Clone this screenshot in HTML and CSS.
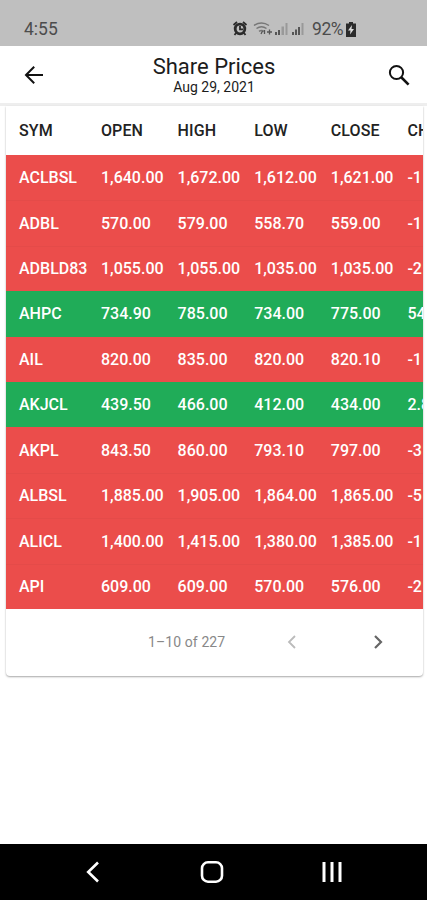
FILE: index.html
```
<!DOCTYPE html>
<html lang="en">
	<head>
		<meta charset="utf-8">
		<title>Share Prices</title>
		<link rel="stylesheet" href="styles.css">
	</head>
	<body>
		<div class="status">
			<span class="time">4:55</span>
			<svg class="status-icons" width="72" height="18" viewBox="0 0 72 18">
				<!-- alarm -->
				<circle cx="8" cy="9" r="4.8" fill="none" stroke="#2b2b2b" stroke-width="2.8"/>
				<path d="M8 6v3.400h3M1.500 5L5 2M14.500 5L11 2M4 13l-1.500 2M12 13l1.500 2" fill="none" stroke="#2b2b2b" stroke-width="1.800"/>
				<!-- wifi -->
				<path d="M22 5.500q7.500-5 15 0M24.500 8.500q5-3.500 10 0M27 11.300q2.500-1.800 5 0" fill="none" stroke="#777" stroke-width="1.500"/>
				<path d="M29 14l1.500-3M32.500 10v4M37.500 9.500v5M35 12h5" fill="none" stroke="#555" stroke-width="1.300"/>
				<!-- signal -->
				<path d="M43 12h2v3h-2zM46 10h2v5h-2z" fill="#555"/>
				<path d="M49.500 6.500h2.500v8.500h-2.500zM53.500 3h2v12h-2z" fill="#999"/>
				<path d="M60 12h2v3h-2zM63 9.500h2v5.500h-2zM66 7h2v8h-2z" fill="#555"/>
				<path d="M69.500 3h2v12h-2z" fill="#999"/>
			</svg>
			<span class="percent">92%</span>
			<svg class="battery" width="10" height="15" viewBox="0 0 10 15">
				<path d="M3 0h4v1.500h3V15H0V1.500h3z" fill="#2b2b2b"/>
				<path d="M6 3L2 8.500h2.500L4 12.500l4-5.500H5.500z" fill="#ddd"/>
			</svg>
		</div>

		<div class="header">
			<svg width="20" height="20" viewBox="0 0 20 20">
				<path d="M10.200 1.800L2 10l8.200 8.200M2 10h17" fill="none" stroke="#111" stroke-width="2"/>
			</svg>
			<div class="title">
				<h1>Share Prices</h1>
				<h2>Aug 29, 2021</h2>
			</div>
			<svg width="22" height="22" viewBox="0 0 22 22">
				<circle cx="8.500" cy="8.500" r="6.600" fill="none" stroke="#111" stroke-width="2"/>
				<path d="M13 13l7.600 7.600" stroke="#111" stroke-width="2.600"/>
			</svg>
		</div>

		<div class="card">
			<ul class="row head">
				<li>SYM</li>
				<li>OPEN</li>
				<li>HIGH</li>
				<li>LOW</li>
				<li>CLOSE</li>
				<li>CH</li>
			</ul>
			<div id="prices"></div>
			<div class="pager">
				<span class="range">1–10 of 227</span>
				<svg class="prev" width="10" height="14" viewBox="0 0 10 14">
					<path d="M8 1L2 7l6 6" fill="none" stroke="#bbb" stroke-width="1.800"/>
				</svg>
				<svg class="next" width="10" height="14" viewBox="0 0 10 14">
					<path d="M2 1l6 6-6 6" fill="none" stroke="#666" stroke-width="2.200"/>
				</svg>
			</div>
		</div>

		<div class="navbar">
			<svg width="14" height="22" viewBox="0 0 14 22">
				<path d="M12 1.500L2.200 11l9.800 9.500" fill="none" stroke="#fff" stroke-width="2.600"/>
			</svg>
			<svg width="24" height="22" viewBox="0 0 24 22">
				<rect x="2" y="1.300" width="20" height="19.400" rx="6" fill="none" stroke="#fff" stroke-width="2.600"/>
			</svg>
			<svg class="recents" width="20" height="22" viewBox="0 0 20 22">
				<path d="M2 1v20M10 1v20M18 1v20" stroke="#fff" stroke-width="3"/>
			</svg>
		</div>

		<script src="prices.js"></script>
	</body>
</html>
```
FILE: styles.css
```
* {
	margin: 0;
	padding: 0;
	box-sizing: border-box;
}
body {
	display: flex;
	flex-direction: column;
	height: 900px;
	overflow: hidden;
	background-color: #fff;
	font-family: Roboto, sans-serif;
}
svg {
	display: block;
	flex: none;
}
.status {
	display: flex;
	align-items: center;
	flex: none;
	height: 46px;
	padding: 12px 0 0 24px;
	background-color: #bfbfbf;
	color: #4c4c4c;
	font-size: 17.5px;
}
.time {
	width: 208px;
}
.percent {
	width: 34px;
	margin-left: 8px;
	letter-spacing: -.4px;
}
.header {
	display: flex;
	align-items: center;
	flex: none;
	height: 60px;
	padding: 1px 17px 0 24px;
	border-bottom: 3px solid #eee;
}
.title {
	flex: 1;
	padding-right: 4px;
	text-align: center;
	color: #1c1c1c;
}
.title h1 {
	font-size: 22px;
	font-weight: 400;
	line-height: 24px;
}
.title h2 {
	font-size: 14px;
	font-weight: 400;
	line-height: 16px;
}
.card {
	flex: none;
	width: 416.5px;
	height: 570px;
	margin-left: 6px;
	overflow: hidden;
	background-color: #fff;
	border-radius: 0 0 4px 4px;
	box-shadow: 0 1px 2px rgba(0,0,0,.35);
}
.row {
	display: grid;
	grid-template-columns: 82px repeat(4, 76.6px) 1fr;
	align-items: center;
	height: 45.4px;
	padding-left: 13px;
	list-style: none;
	white-space: nowrap;
	color: #fff;
	font-size: 16px;
	font-weight: 500;
}
.row li {
	min-width: 0;
}
.row.head {
	height: 49px;
	color: #222;
	letter-spacing: .1px;
}
.down {
	background-color: #eb4d4b;
}
.down + .down {
	border-top: 1px solid #e44b49;
}
.up {
	background-color: #20ac58;
}
.pager {
	display: flex;
	align-items: center;
	height: 67px;
	color: #888;
	font-size: 14px;
}
.range {
	width: 139px;
	margin-left: 142px;
	letter-spacing: .1px;
}
.next {
	margin-left: 76px;
}
.navbar {
	display: flex;
	align-items: center;
	flex: none;
	height: 56px;
	margin-top: auto;
	padding-left: 86px;
	gap: 100px;
	background-color: #000;
}
.recents {
	margin-left: -2px;
}
```
FILE: prices.js
```
var pricesElement = document.getElementById("prices");

var prices = [
	["ACLBSL", "1,640.00", "1,672.00", "1,612.00", "1,621.00", "-1"],
	["ADBL", "570.00", "579.00", "558.70", "559.00", "-1"],
	["ADBLD83", "1,055.00", "1,055.00", "1,035.00", "1,035.00", "-2"],
	["AHPC", "734.90", "785.00", "734.00", "775.00", "54"],
	["AIL", "820.00", "835.00", "820.00", "820.10", "-1"],
	["AKJCL", "439.50", "466.00", "412.00", "434.00", "2.8"],
	["AKPL", "843.50", "860.00", "793.10", "797.00", "-3"],
	["ALBSL", "1,885.00", "1,905.00", "1,864.00", "1,865.00", "-5"],
	["ALICL", "1,400.00", "1,415.00", "1,380.00", "1,385.00", "-1"],
	["API", "609.00", "609.00", "570.00", "576.00", "-2"]
];

var str = "";
for(var i = 0; i < prices.length; i++) {
	var state = prices[i][5].charAt(0) === "-" ? "down" : "up";
	str += '<ul class="row ' + state + '">';
	for(var j = 0; j < prices[i].length; j++) {
		str += "<li>" + prices[i][j] + "</li>";
	}
	str += "</ul>";
}
pricesElement.innerHTML = str;
```
